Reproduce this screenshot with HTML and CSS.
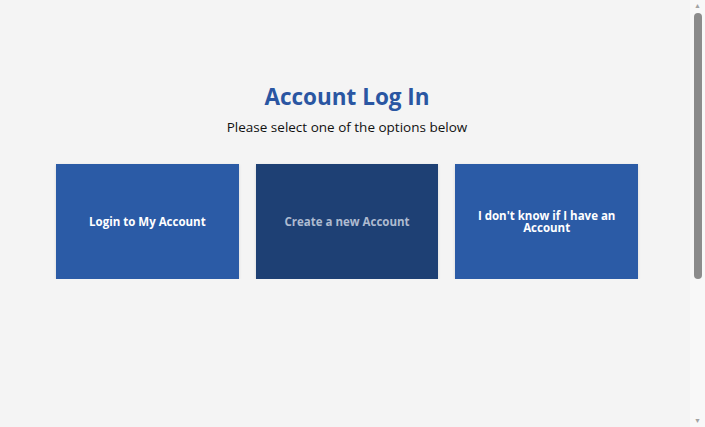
FILE: index.html
```html
<!DOCTYPE html>
<html lang="en">

<head>
    <meta charset="UTF-8" />
    <meta name="viewport" content="width=device-width, initial-scale=1.0" />
    <title>Account Log In</title>
    <link rel="stylesheet" href="styles.css">
</head>

<body>
    <div class="container">
        <h1>Account Log In</h1>
        <p class="subtitle">Please select one of the options below</p>

        <div class="options">
            <a class="option" href="#">Login to My Account</a>
            <a class="option option-dark" href="#">Create a new Account</a>
            <a class="option" href="#">I don't know if I have an Account</a>
        </div>
    </div>

    <div class="scrollbar">
        <span class="arrow">&#9650;</span>
        <div class="track"><div class="thumb"></div></div>
        <span class="arrow">&#9660;</span>
    </div>
</body>

</html>
```

FILE: styles.css
```css
body {
    font-family: "Open Sans", "Noto Sans", sans-serif;
    margin: 0;
    padding: 0 15px 0 4px;
    background: #f4f4f4;
}

.container {
    max-width: 582px;
    margin: auto;
    padding-top: 82px;
    text-align: center;
}

h1 {
    color: #2a56a2;
    font-size: 22.5px;
    font-weight: 700;
    margin: 0;
    line-height: 30px;
}

.subtitle {
    color: #111;
    font-size: 13.5px;
    margin: 5px 0 0;
    line-height: 20px;
}

.options {
    display: flex;
    gap: 17px;
    margin-top: 27px;
}

.option {
    flex: 1;
    height: 115px;
    display: flex;
    align-items: center;
    justify-content: center;
    padding: 0 22px;
    background: #2b5ba6;
    color: #fff;
    font-size: 11.5px;
    font-weight: 700;
    line-height: 12px;
    text-decoration: none;
    box-shadow: 0 1px 3px rgba(0, 0, 0, 0.12);
}

.option-dark {
    background: #1e4074;
    color: #aebbd0;
}

/* fake window scrollbar */
.scrollbar {
    position: fixed;
    top: 0;
    right: 0;
    bottom: 0;
    width: 15px;
    background: #f8f8f8;
    display: flex;
    flex-direction: column;
    align-items: center;
}

.arrow {
    font-size: 7px;
    line-height: 12px;
    color: #a3a3a3;
}

.track {
    flex: 1;
    width: 100%;
    display: flex;
    justify-content: center;
}

.thumb {
    width: 8px;
    height: 266px;
    margin-top: 1px;
    border-radius: 4px;
    background: #8c8c8c;
}
```
